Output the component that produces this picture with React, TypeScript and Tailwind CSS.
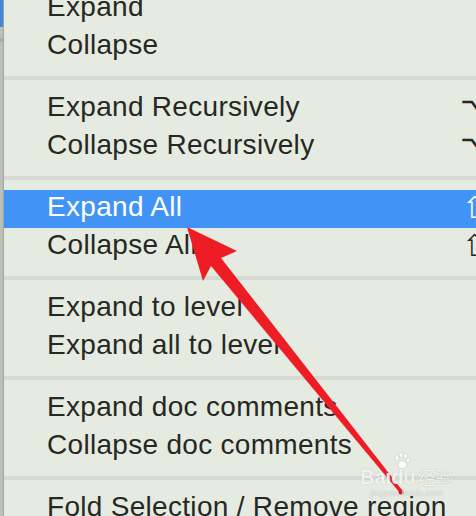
import React from "react";

type Item = { label: string; shortcut?: string; active?: boolean; shift?: boolean };

const groups: Item[][] = [
  [{ label: "Expand" }, { label: "Collapse" }],
  [
    { label: "Expand Recursively", shortcut: "⌥⌘+" },
    { label: "Collapse Recursively", shortcut: "⌥⌘-" },
  ],
  [
    { label: "Expand All", shortcut: "⇧⌘+", active: true, shift: true },
    { label: "Collapse All", shortcut: "⇧⌘-", shift: true },
  ],
  [{ label: "Expand to level" }, { label: "Expand all to level" }],
  [{ label: "Expand doc comments" }, { label: "Collapse doc comments" }],
  [{ label: "Fold Selection / Remove region" }],
];

const MenuRow = ({ item }: { item: Item }) => (
  <div
    className={
      "flex h-[38px] shrink-0 items-start pl-[43px] leading-[34px] whitespace-nowrap " +
      (item.active ? "bg-[#4194f6] text-white" : "text-[#262823]")
    }
  >
    <span className="w-[415px] shrink-0 tracking-[0.3px]">{item.label}</span>
    {item.shortcut && (
      <span
        className={
          "-ml-[2px] font-['DejaVu_Sans',sans-serif] text-[30px] leading-[36px] " +
          (item.shift ? "ml-[0px]" : "")
        }
      >
        {item.shortcut}
      </span>
    )}
  </div>
);

const Separator = () => (
  <div className="flex h-[24px] shrink-0 items-center">
    <div className="h-[4px] w-full bg-[#d6dad0]" />
  </div>
);

const Arrow = () => (
  <svg
    className="pointer-events-none absolute inset-0"
    width="476"
    height="516"
    viewBox="0 0 476 516"
  >
    <polygon
      points="187,227 237,251 221,258 402,490 400,493 211,266 203,281"
      fill="#ee1d25"
    />
    <circle cx="401" cy="492" r="2.5" fill="#d8141c" />
  </svg>
);

const Watermark = () => (
  <div className="pointer-events-none absolute left-[360px] top-[466px] flex flex-col items-center text-white/85 [text-shadow:0_0_1px_rgba(120,120,120,0.6)]">
    <div className="relative flex items-end font-['Liberation_Sans',sans-serif] text-[20px] font-bold leading-[22px]">
      <span>Bai</span>
      <span className="relative">
        du
        <svg
          className="absolute -top-[14px] left-[2px]"
          width="18"
          height="18"
          viewBox="0 0 18 18"
        >
          <g fill="rgba(255,255,255,0.85)" stroke="rgba(150,150,150,0.5)" strokeWidth="0.5">
            <ellipse cx="4" cy="6" rx="2" ry="2.5" />
            <ellipse cx="8" cy="3" rx="2" ry="2.5" />
            <ellipse cx="12.5" cy="4" rx="2" ry="2.5" />
            <ellipse cx="15" cy="8.5" rx="1.8" ry="2.2" />
            <path d="M5 14 C5 10 8 8 10 9 C13 10 15 12 13 15 C11 17 6 17 5 14 Z" />
          </g>
        </svg>
      </span>
      <span className="ml-[2px] font-['Noto_Sans_CJK_SC',sans-serif] text-[18px] font-normal">
        经验
      </span>
    </div>
    <div className="font-['Liberation_Sans',sans-serif] text-[9px] leading-[10px] text-white/70">
      jingyan.baidu.com
    </div>
  </div>
);

export default function App() {
  return (
    <div className="relative flex h-[516px] w-[476px] overflow-hidden bg-[#e6ebe1] font-['Liberation_Sans',Arial,sans-serif] text-[28px]">
      <div className="flex w-[3px] shrink-0 flex-col bg-[#bcbfb7]">
        <div className="h-[27px] bg-[#3e86de]" />
        <div className="mt-[11px] h-[4px] bg-[#a9aca4]" />
      </div>
      <div className="w-[1px] shrink-0 bg-[#a2a59d]" />
      <div className="flex min-w-0 flex-1 flex-col overflow-hidden">
        <div className="-mt-[10px] flex flex-col">
          {groups.map((group, gi) => (
            <React.Fragment key={gi}>
              {gi > 0 && <Separator />}
              {group.map((item) => (
                <MenuRow key={item.label} item={item} />
              ))}
            </React.Fragment>
          ))}
        </div>
      </div>
      <Arrow />
      <Watermark />
    </div>
  );
}
